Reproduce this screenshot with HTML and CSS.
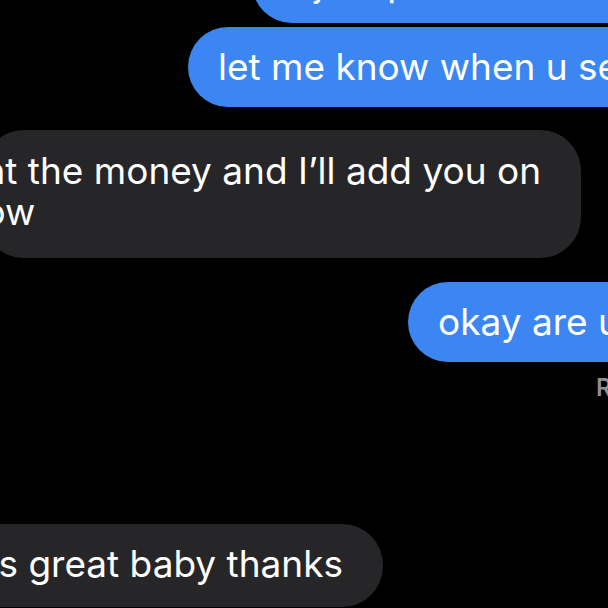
FILE: index.html
```html
<!DOCTYPE html>
<html>
<head>
    <meta charset="UTF-8">
    <title>Messages</title>
    <link rel="stylesheet" href="styles.css">
</head>
<body>

<div class="thread">
    <div class="row row-out out-top">
        <div class="bubble blue">u just paid it? let me check</div>
    </div>
    <div class="row row-out out-know">
        <div class="bubble blue">let me know when u see it</div>
    </div>
    <div class="row row-in in-money">
        <div class="bubble gray two-line">nt the money and I’ll add you on<br>ow</div>
    </div>
    <div class="row row-out out-okay">
        <div class="bubble blue">okay are u sure</div>
    </div>
    <div class="receipt">Read 9:41 PM</div>
    <div class="row row-in in-thanks">
        <div class="bubble gray tall">was great baby thanks</div>
    </div>
</div>

</body>
</html>
```

FILE: styles.css
```css
html, body {
    margin: 0;
    padding: 0;
    height: 100%;
    overflow: hidden;
    background: #000000;
    font-family: "Inter", "Liberation Sans", sans-serif;
    color: #ffffff;
}

.thread {
    display: flex;
    flex-direction: column;
}

.row {
    display: flex;
}

.row-out {
    justify-content: flex-start;
}

.row-in {
    justify-content: flex-end;
}

.bubble {
    flex-shrink: 0;
    white-space: nowrap;
    font-size: 37px;
    line-height: 40px;
    padding: 20px 30px;
    border-radius: 41px;
}

.blue {
    background: #3b86f2;
}

.gray {
    background: #262628;
    padding-right: 40px;
}

.two-line {
    padding-left: 0;
    padding-bottom: 26px;
    line-height: 41px;
}

.tall {
    padding-bottom: 23px;
}

/* rows, top to bottom */
.out-top {
    margin-top: -57px;
    padding-left: 252px;
}

.out-know {
    margin-top: 4px;
    padding-left: 188px;
}

.in-money {
    margin-top: 23px;
    padding-right: 27px;
}

.out-okay {
    margin-top: 24px;
    padding-left: 408px;
}

.receipt {
    margin-top: 12px;
    padding-left: 596px;
    font-size: 24px;
    line-height: 28px;
    font-weight: 600;
    color: #8e8e93;
    white-space: nowrap;
}

.in-thanks {
    margin-top: 122px;
    padding-right: 225px;
}
```
